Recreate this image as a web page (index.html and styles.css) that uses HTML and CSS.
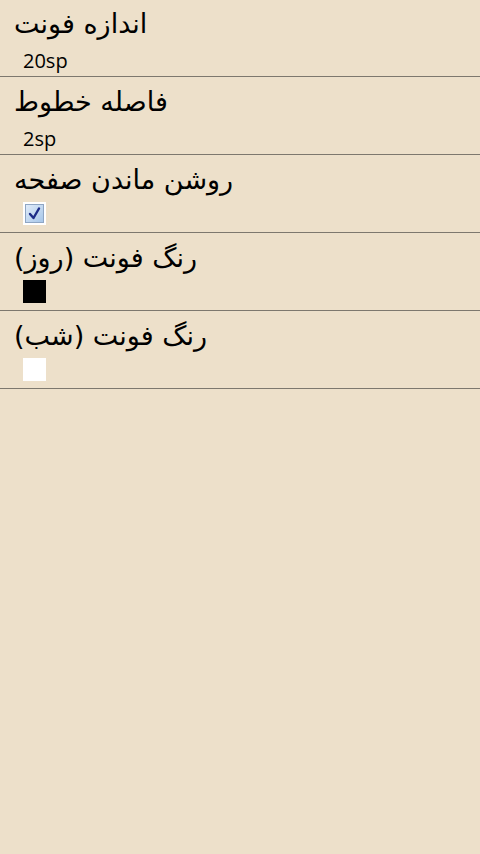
FILE: index.html
```html
<!DOCTYPE html>
<html lang="fa">
<head>
    <meta charset="UTF-8">
    <meta name="viewport" content="width=device-width, initial-scale=1.0">
    <title>تنظیمات</title>
    <link rel="stylesheet" href="styles.css">
</head>
<body>

<ul class="prefs">
    <li class="pref">
        <div class="pref-title">اندازه فونت</div>
        <div class="pref-summary">20sp</div>
    </li>
    <li class="pref">
        <div class="pref-title">فاصله خطوط</div>
        <div class="pref-summary">2sp</div>
    </li>
    <li class="pref">
        <div class="pref-title">روشن ماندن صفحه</div>
        <div class="pref-widget">
            <span class="check">
                <svg width="15" height="15" viewBox="0 0 15 15">
                    <path d="M3 8 L6.5 12 L12 2.5" fill="none" stroke="#1c2c88" stroke-width="2.4" stroke-linecap="round" stroke-linejoin="round"/>
                </svg>
            </span>
        </div>
    </li>
    <li class="pref">
        <div class="pref-title">رنگ فونت (روز)</div>
        <div class="pref-widget">
            <span class="swatch swatch-black"></span>
        </div>
    </li>
    <li class="pref">
        <div class="pref-title">رنگ فونت (شب)</div>
        <div class="pref-widget">
            <span class="swatch swatch-white"></span>
        </div>
    </li>
</ul>

</body>
</html>
```

FILE: styles.css
```css
body {
    margin: 0;
    background-color: #ede0ca;
    font-family: "DejaVu Sans", sans-serif;
    color: #000;
}

.prefs {
    list-style: none;
    margin: -1px 0 0 0;
    padding: 0;
}

.pref {
    height: 77px;
    border-bottom: 1px solid #7d786e;
    padding-left: 14px;
}

.pref-title {
    direction: rtl;
    unicode-bidi: embed;
    display: inline-block;
    font-size: 27px;
    line-height: 44px;
    padding-top: 3px;
}

.pref-summary {
    font-family: "Open Sans", sans-serif;
    font-size: 20px;
    line-height: 22px;
    padding-top: 4px;
    padding-left: 9px;
}

.pref-widget {
    padding-left: 9px;
}

.check {
    display: flex;
    align-items: center;
    justify-content: center;
    width: 19px;
    height: 19px;
    border: 2px solid #fff;
    box-shadow: inset 0 0 0 1px #8fa6c4;
    background: linear-gradient(135deg, #e4eefa, #a3c4e8);
}

.swatch {
    display: block;
    width: 23px;
    height: 23px;
}

.swatch-black {
    background-color: #000;
}

.swatch-white {
    background-color: #fff;
}
```
